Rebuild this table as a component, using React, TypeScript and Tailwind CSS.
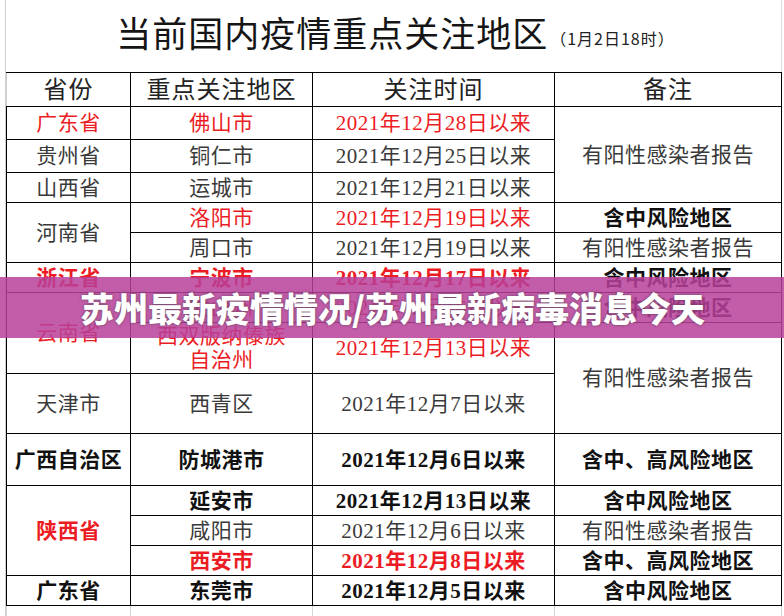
import type { ReactNode } from "react"

type Cell = { t: ReactNode; c?: "red" | "gray" | "black"; b?: boolean; rs?: number }
type Row = { h: number; cells: Cell[] }

const rows: Row[] = [
  {
    h: 33,
    cells: [
      { t: "广东省", c: "red" },
      { t: "佛山市", c: "red" },
      { t: "2021年12月28日以来", c: "red" },
      { t: "有阳性感染者报告", rs: 3 },
    ],
  },
  { h: 33, cells: [{ t: "贵州省" }, { t: "铜仁市" }, { t: "2021年12月25日以来" }] },
  { h: 30, cells: [{ t: "山西省" }, { t: "运城市" }, { t: "2021年12月21日以来" }] },
  {
    h: 30,
    cells: [
      { t: "河南省", rs: 2 },
      { t: "洛阳市", c: "red" },
      { t: "2021年12月19日以来", c: "red" },
      { t: "含中风险地区", c: "black", b: true },
    ],
  },
  { h: 30, cells: [{ t: "周口市" }, { t: "2021年12月19日以来" }, { t: "有阳性感染者报告" }] },
  {
    h: 30,
    cells: [
      { t: "浙江省", c: "red", b: true },
      { t: "宁波市", c: "red", b: true },
      { t: "2021年12月17日以来", c: "red", b: true },
      { t: "含中风险地区", c: "black", b: true },
    ],
  },
  {
    h: 30,
    cells: [
      { t: "云南省", c: "red", rs: 2 },
      { t: "文山州", c: "red" },
      { t: "2021年12月16日以来", c: "red" },
      { t: "含中风险地区", c: "black", b: true },
    ],
  },
  {
    h: 51,
    cells: [
      {
        t: (
          <>
            西双版纳傣族
            <br />
            自治州
          </>
        ),
        c: "red",
      },
      { t: "2021年12月13日以来", c: "red" },
      { t: "有阳性感染者报告", rs: 2 },
    ],
  },
  { h: 60, cells: [{ t: "天津市" }, { t: "西青区" }, { t: "2021年12月7日以来" }] },
  {
    h: 52,
    cells: [
      { t: "广西自治区", c: "black", b: true },
      { t: "防城港市", c: "black", b: true },
      { t: "2021年12月6日以来", c: "black", b: true },
      { t: "含中、高风险地区", c: "black", b: true },
    ],
  },
  {
    h: 30,
    cells: [
      { t: "陕西省", c: "red", b: true, rs: 3 },
      { t: "延安市", c: "black", b: true },
      { t: "2021年12月13日以来", c: "black", b: true },
      { t: "含中风险地区", c: "black", b: true },
    ],
  },
  { h: 30, cells: [{ t: "咸阳市" }, { t: "2021年12月6日以来" }, { t: "有阳性感染者报告" }] },
  {
    h: 30,
    cells: [
      { t: "西安市", c: "red", b: true },
      { t: "2021年12月8日以来", c: "red", b: true },
      { t: "含中、高风险地区", c: "black", b: true },
    ],
  },
  {
    h: 30,
    cells: [
      { t: "广东省", c: "black", b: true },
      { t: "东莞市", c: "black", b: true },
      { t: "2021年12月5日以来", c: "black", b: true },
      { t: "含中风险地区", c: "black", b: true },
    ],
  },
]

const colorClass = (c?: Cell["c"]) => {
  if (c === "red") return "text-[#ec1c24]"
  if (c === "black") return "text-[#111111]"
  return "text-[#3a3a3a]"
}

export default function App() {
  return (
    <div className="relative w-[784px] h-[616px] overflow-hidden bg-white font-['Liberation_Serif','Noto_Sans_CJK_SC',serif]">
      <div className="flex h-full">
        {/* sheet gutter */}
        <div className="w-[6px] shrink-0 border-r border-[#cfcfcf]" />

        <div className="w-[776px] shrink-0">
          {/* title */}
          <div className="h-[72px] flex items-center justify-center pl-[4px] pb-[2px] border-r border-[#dcdcdc]">
            <span className="text-[35px] tracking-[1px] text-[#151515] leading-none">
              当前国内疫情重点关注地区
            </span>
            <span className="text-[16px] tracking-[1px] text-[#222] ml-[2px] mt-[6px] font-['Noto_Sans_CJK_SC',sans-serif]">
              （1月2日18时）
            </span>
          </div>

          <table className="table-fixed border-collapse w-[775px] text-center">
            <colgroup>
              <col className="w-[124px]" />
              <col className="w-[182px]" />
              <col className="w-[242px]" />
              <col className="w-[227px]" />
            </colgroup>
            <thead>
              <tr className="h-[34px]">
                {["省份", "重点关注地区", "关注时间", "备注"].map((h, i) => (
                  <th
                    key={h}
                    className={`border border-black ${i === 0 ? "border-l-[#cfcfcf]" : ""} font-normal text-[24px] tracking-[1px] text-[#222] leading-none p-0`}
                  >
                    {h}
                  </th>
                ))}
              </tr>
            </thead>
            <tbody>
              {rows.map((r, ri) => (
                <tr key={ri} style={{ height: r.h }}>
                  {r.cells.map((cell, ci) => (
                    <td
                      key={ci}
                      rowSpan={cell.rs}
                      className={`border border-black p-0 text-[21px] tracking-[0.5px] leading-[24px] ${colorClass(cell.c)} ${cell.b ? "font-bold" : "font-normal"}`}
                    >
                      {cell.t}
                    </td>
                  ))}
                </tr>
              ))}
              <tr className="h-[20px]">
                <td className="border-x border-[#d6d6d6]" />
                <td className="border-x border-[#d6d6d6]" />
                <td className="border-x border-[#d6d6d6]" />
                <td className="border-x border-[#d6d6d6]" />
              </tr>
            </tbody>
          </table>
        </div>
      </div>

      {/* watermark banner */}
      <div className="absolute left-0 top-[277px] w-full h-[61px] bg-[#b8409a]/85 flex items-center pl-[80px]">
        <span className="text-white font-black text-[34px] leading-none font-['Noto_Sans_CJK_SC',sans-serif] [text-shadow:0_0_3px_rgba(60,60,60,0.7)]">
          苏州最新疫情情况/苏州最新病毒消息今天
        </span>
      </div>
    </div>
  )
}
